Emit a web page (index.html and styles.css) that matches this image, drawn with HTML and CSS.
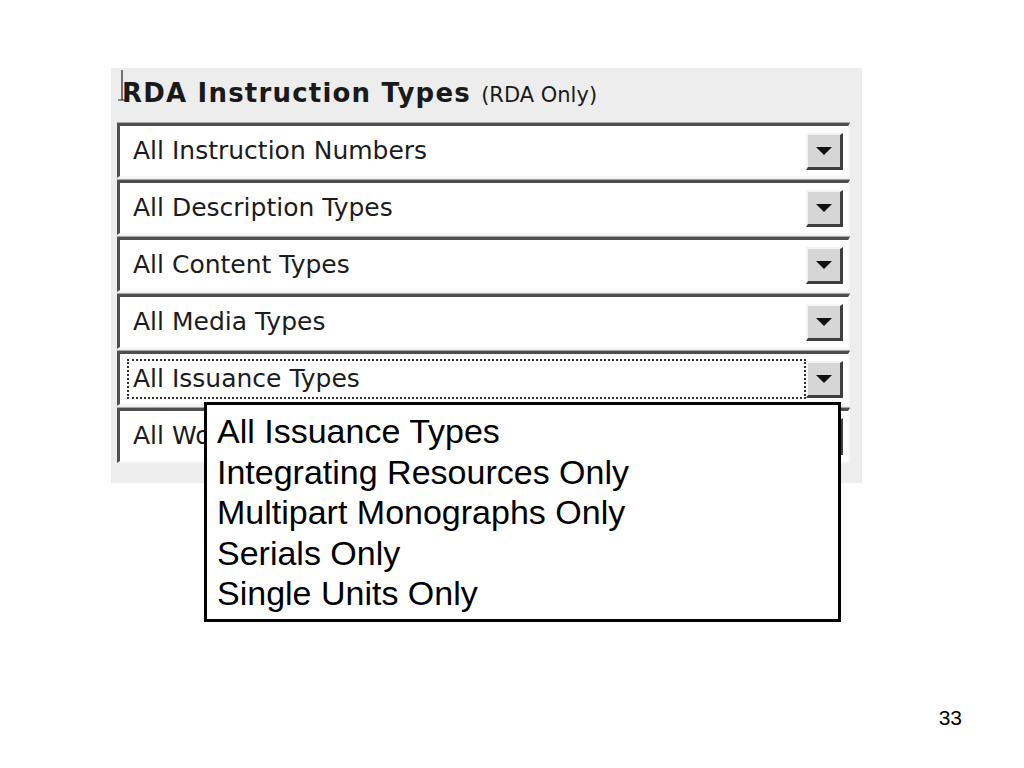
FILE: index.html
```html
<!DOCTYPE html>
<html>
<head>
    <title>RDA Instruction Types</title>
    <link rel="stylesheet" href="styles.css">
</head>
<body>
    <div class="slide">
        <div class="panel">
            <svg class="cursor" width="10" height="34" viewBox="0 0 10 34">
                <path d="M5 1 V31 M1 31 H9" stroke="#222" stroke-width="1.2" fill="none"/>
            </svg>
            <h2 class="title">RDA Instruction Types <span class="note">(RDA Only)</span></h2>

            <div class="select">
                <span class="value">All Instruction Numbers</span>
                <span class="arrowBtn"><span class="tri"></span></span>
            </div>
            <div class="select">
                <span class="value">All Description Types</span>
                <span class="arrowBtn"><span class="tri"></span></span>
            </div>
            <div class="select">
                <span class="value">All Content Types</span>
                <span class="arrowBtn"><span class="tri"></span></span>
            </div>
            <div class="select">
                <span class="value">All Media Types</span>
                <span class="arrowBtn"><span class="tri"></span></span>
            </div>
            <div class="select focused">
                <span class="value">All Issuance Types</span>
                <span class="arrowBtn"><span class="tri"></span></span>
            </div>
            <!-- the open list below covers most of this one -->
            <div class="select">
                <span class="value">All Work Types</span>
                <span class="arrowBtn"><span class="tri"></span></span>
            </div>

            <ul class="dropList">
                <li>All Issuance Types</li>
                <li>Integrating Resources Only</li>
                <li>Multipart Monographs Only</li>
                <li>Serials Only</li>
                <li>Single Units Only</li>
            </ul>
        </div>
        <div class="pageNum">33</div>
    </div>
</body>
</html>
```

FILE: styles.css
```css
body {
    margin: 0;
    background-color: #ffffff;
}

.slide {
    width: 1024px;
    height: 768px;
    display: flex;
    flex-direction: column;
    position: relative;
}

.panel {
    position: relative;
    margin: 68px 0 0 111px;
    width: 751px;
    padding: 8px 12px 18px 6px;
    box-sizing: border-box;
    background-color: #ededed;
}

.cursor {
    position: absolute;
    left: 6px;
    top: 1px;
}

.title {
    margin: 0 0 11px 0;
    padding-left: 5px;
    font-family: "DejaVu Sans", sans-serif;
    font-size: 26px;
    line-height: 34px;
    font-weight: bold;
    letter-spacing: 1.2px;
    color: #1a1a1a;
}

.note {
    font-weight: normal;
    font-size: 21px;
    letter-spacing: 0;
}

.select {
    display: flex;
    align-items: center;
    height: 55px;
    box-sizing: border-box;
    margin-bottom: 2px;
    padding: 0 5px 0 7px;
    background-color: #ffffff;
    border-top: 3px solid #4e4e4e;
    border-left: 3px solid #4e4e4e;
    border-right: 2px solid #f7f7f7;
    border-bottom: 2px solid #f7f7f7;
    box-shadow: 0 -1px 0 #a8a8a8;
}

.value {
    flex: 1;
    height: 40px;
    box-sizing: border-box;
    padding-left: 4px;
    border: 2px dotted transparent;
    font-family: "DejaVu Sans", sans-serif;
    font-size: 25px;
    line-height: 36px;
    color: #1c1c1c;
    white-space: nowrap;
    overflow: hidden;
}

.focused .value {
    border-color: #333333;
}

.arrowBtn {
    width: 37px;
    height: 37px;
    box-sizing: border-box;
    display: flex;
    align-items: center;
    justify-content: center;
    background-color: #d6d6d6;
    border-top: 2px solid #f4f4f4;
    border-left: 2px solid #f4f4f4;
    border-right: 3px solid #3e3e3e;
    border-bottom: 3px solid #3e3e3e;
}

.tri {
    width: 0;
    height: 0;
    border-left: 8px solid transparent;
    border-right: 8px solid transparent;
    border-top: 8px solid #111111;
}

.dropList {
    position: absolute;
    left: 93px;
    top: 334px;
    width: 637px;
    height: 220px;
    box-sizing: border-box;
    margin: 0;
    padding: 6px 10px;
    list-style: none;
    background-color: #ffffff;
    border: 3px solid #000000;
    font-family: "Liberation Sans", Arial, sans-serif;
    font-size: 34px;
    line-height: 40.5px;
    color: #000000;
}

.pageNum {
    margin-top: auto;
    margin-bottom: 38px;
    padding-right: 62px;
    text-align: right;
    font-family: "Liberation Sans", Arial, sans-serif;
    font-size: 21px;
    color: #000000;
}
```
